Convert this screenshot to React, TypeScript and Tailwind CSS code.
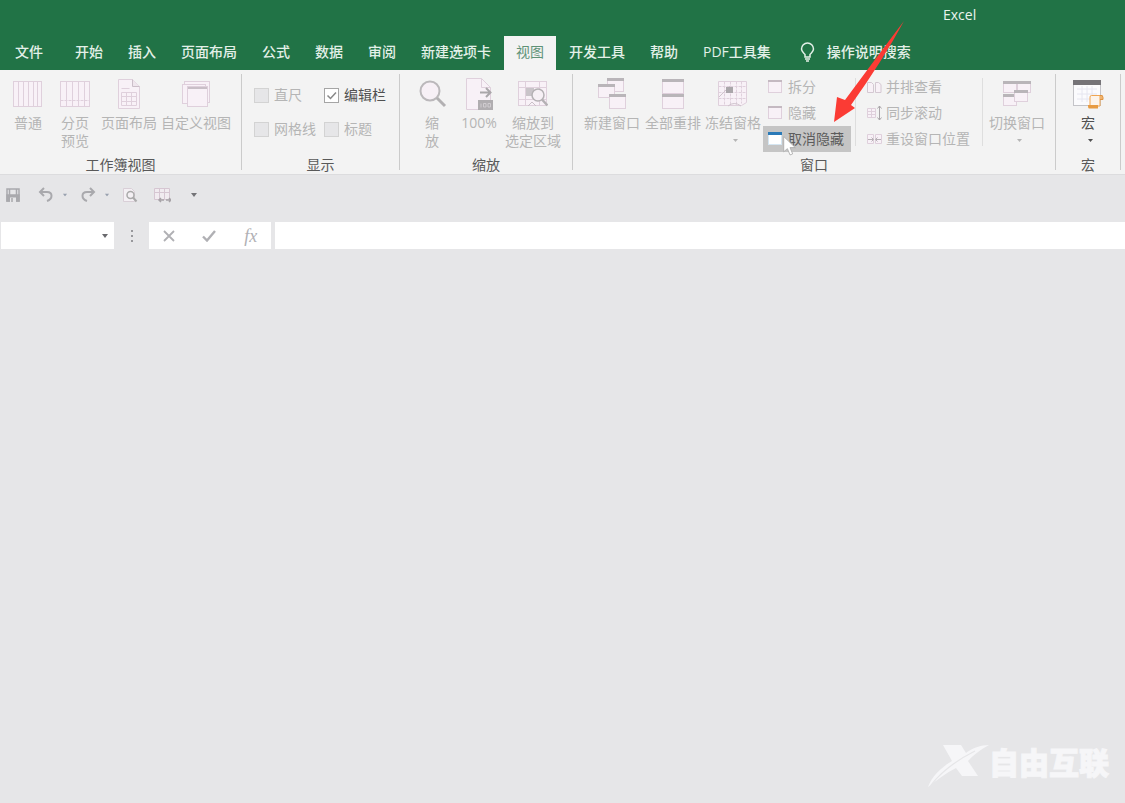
import React from 'react';

const LINE = '#dfd0dc';
const FILL = '#f8f1f7';
const BAR = '#b9b5b9';

const tabs = ['文件', '开始', '插入', '页面布局', '公式', '数据', '审阅', '新建选项卡', '视图', '开发工具', '帮助', 'PDF工具集'];

/* ---------- Icons ---------- */

const NormalViewIcon = () => (
  <svg width="30" height="28" viewBox="0 0 30 28" fill={FILL} stroke={LINE}>
    <rect x="0.5" y="1.5" width="28" height="25" />
    <path d="M5.5 1.5v25M10.5 1.5v25M15.5 1.5v25M20.5 1.5v25M24.5 1.5v25" />
  </svg>
);

const PageBreakIcon = () => (
  <svg width="30" height="28" viewBox="0 0 30 28" fill={FILL} stroke={LINE}>
    <rect x="0.5" y="1.5" width="29" height="25" />
    <path d="M6.5 1.5v25M12.5 1.5v25M18.5 1.5v25M24.5 1.5v25" />
    <path d="M0.5 20.5h29" strokeDasharray="3 1" />
  </svg>
);

const PageLayoutIcon = () => (
  <svg width="24" height="30" viewBox="0 0 24 30" fill={FILL} stroke={LINE}>
    <path d="M1.5 0.5h14l7 7v22h-21z" />
    <path d="M15.5 0.5v7h7" fill="#efe6ed" stroke="#cbbec8" />
    <path d="M4.5 9.5h8M4.5 13.5h15v13h-15zM4.5 17.5h15M4.5 22.5h15M9.5 13.5v13M14.5 13.5v13" />
  </svg>
);

const CustomViewIcon = () => (
  <svg width="28" height="28" viewBox="0 0 28 28" fill={FILL} stroke={LINE}>
    <rect x="2.5" y="1.5" width="25" height="21" />
    <rect x="0.5" y="4.5" width="23" height="19" />
    <rect x="5.5" y="6.5" width="20" height="20" />
    <path d="M6 8h19" stroke="#c9bfc7" strokeWidth="2" />
  </svg>
);

const MagnifierIcon = () => (
  <svg width="30" height="30" viewBox="0 0 30 30" fill="none">
    <circle cx="13" cy="12" r="9.5" fill="#f7f0f6" stroke="#bbb8bb" strokeWidth="2" />
    <path d="M20 19l8 8" stroke="#b2b0b2" strokeWidth="3" />
  </svg>
);

const Zoom100Icon = () => (
  <svg width="28" height="32" viewBox="0 0 28 32" fill="none">
    <path d="M1.5 0.5h15l9 9v22h-24z" fill={FILL} stroke={LINE} />
    <path d="M16.5 0.5v9h9" stroke={LINE} />
    <path d="M15 14.5h10M21 10l4.5 4.5L21 19" stroke="#aaa7aa" strokeWidth="2" />
    <rect x="13" y="22" width="15" height="10" fill="#b0adb0" />
    <path d="M16 25.5v4M18.5 25.500h2.500v3.500h-2.500zM23 25.500h2.500v3.500H23z" stroke="#d0ccd0" />
  </svg>
);

const ZoomSelectionIcon = () => (
  <svg width="30" height="28" viewBox="0 0 30 28" fill="none">
    <rect x="0.5" y="1.5" width="28" height="24" fill={FILL} stroke={LINE} />
    <path d="M0.5 7.5h28M0.5 19.5h28M7.5 1.5v24M21.5 1.5v24" stroke={LINE} />
    <path d="M8 8h8v8H8z" fill="#c9c4c9" />
    <path d="M10 26l4-4 4 4" stroke="#c9c0c7" />
    <circle cx="20" cy="15" r="6" fill="#f6f0f5" stroke="#b4b1b4" strokeWidth="1.5" />
    <path d="M24 19.5l5.5 6" stroke="#b4b1b4" strokeWidth="2.5" />
  </svg>
);

const Pane = ({ x, y, w, h }: { x: number; y: number; w: number; h: number }) => (
  <g>
    <rect x={x + 0.5} y={y + 0.5} width={w - 1} height={h - 1} fill={FILL} stroke={LINE} />
    <rect x={x} y={y} width={w} height="3" fill={BAR} />
  </g>
);

const NewWindowIcon = () => (
  <svg width="28" height="32" viewBox="0 0 28 32">
    <Pane x={9} y={0} w={17} h={14} />
    <Pane x={0} y={6} w={17} h={14} />
    <Pane x={11} y={16} w={17} h={15} />
  </svg>
);

const ArrangeIcon = () => (
  <svg width="22" height="30" viewBox="0 0 22 30">
    <Pane x={0} y={0} w={22} h={15} />
    <Pane x={0} y={15} w={22} h={15} />
  </svg>
);

const FreezeIcon = () => (
  <svg width="30" height="28" viewBox="0 0 30 28" fill="none" stroke={LINE}>
    <path d="M0.5 1.5h28v21l-5 3h-23z" fill={FILL} />
    <path d="M0.5 6.5h28M0.5 12.5h28M0.5 18.5h28M6.5 1.5v24M12.5 1.5v24M18.5 1.5v24M23.5 1.5v22" strokeDasharray="3 1" />
    <path d="M1 17L12 6" stroke="#cfc3cc" />
    <path d="M8 7h7v6H8z" fill="#aaa6aa" stroke="none" />
    <path d="M10 26q6-5 13 0" stroke="#cfc3cc" />
  </svg>
);

const SwitchIcon = () => (
  <svg width="30" height="28" viewBox="0 0 30 28">
    <Pane x={1} y={1} w={14} h={12} />
    <Pane x={15} y={1} w={14} h={12} />
    <Pane x={1} y={14} w={14} h={12} />
    <Pane x={12} y={10} w={14} h={12} />
  </svg>
);

const MacroIcon = () => (
  <svg width="32" height="30" viewBox="0 0 32 30" fill="none">
    <rect x="1.5" y="1.5" width="27" height="25" fill="#fbfbfd" stroke="#c4c4c8" />
    <path d="M5 10h20M5 15h20M5 20h20M10 7v16M15 7v16M20 7v16" stroke="#e6e6f0" />
    <rect x="1" y="1" width="28" height="5" fill="#757377" />
    <path d="M19.5 16.5h8.5v10.5h-10v-9q0-1.500 1.500-1.500z" fill="#fdf4ea" stroke="#f0a652" />
    <path d="M28 16.5q3-1 3 2v2h-3" fill="#efb36f" stroke="#df9340" />
    <path d="M16 26h10v3.500h-9q-1 0-1-3.500z" fill="#e89b41" />
  </svg>
);

const SmallPane = ({ active = false }: { active?: boolean }) => (
  <svg width="14" height="14" viewBox="0 0 14 14" className="shrink-0">
    <rect x="0.5" y="0.5" width="13" height="12" fill={active ? '#ffffff' : FILL} stroke={active ? '#d5e6f2' : LINE} />
    <rect x="0" y="0" width="14" height={active ? 3 : 2} fill={active ? '#2a7ab8' : '#c4b9c1'} />
  </svg>
);

const SideBySideIcon = () => (
  <svg width="15" height="14" viewBox="0 0 15 14" fill={FILL} stroke="#d4c8d2" className="shrink-0">
    <path d="M0.5 2.5h4l2 2v8h-6zM8.5 2.5h3l2.500 2v8H8.500z" />
  </svg>
);

const SyncIcon = () => (
  <svg width="15" height="16" viewBox="0 0 15 16" fill="none" stroke={LINE} className="shrink-0">
    <path d="M0.5 3.5h8v9h-8zM0.5 6.5h8M0.5 9.5h8M4.5 3.5v9" fill={FILL} />
    <path d="M12.5 1v14M10.5 3.5l2-2.500 2 2.500M10.500 12.500l2 2.500 2-2.500" stroke="#aaa6aa" />
  </svg>
);

const ResetIcon = () => (
  <svg width="15" height="12" viewBox="0 0 15 12" fill={FILL} stroke={LINE} className="shrink-0">
    <path d="M0.5 1.5h6v9h-6zM8.5 1.5h6v9h-6z" />
    <path d="M1 6.5h5M4.5 4.5l2 2-2 2M14 6.5H9M10.5 4.5l-2 2 2 2" fill="none" stroke="#b7b1b6" />
  </svg>
);

const Caret = ({ className = 'text-gray-400' }: { className?: string }) => (
  <svg width="6" height="4" viewBox="0 0 6 4" fill="currentColor" className={className}>
    <path d="M0 0h6L3 4z" />
  </svg>
);

/* ---------- Ribbon parts ---------- */

const BigButton = ({ icon, lines, width, caret = false, enabled = false }: {
  icon: React.ReactNode;
  lines: string[];
  width: string;
  caret?: boolean;
  enabled?: boolean;
}) => (
  <button
    disabled={!enabled}
    className={`flex flex-col items-center shrink-0 whitespace-nowrap leading-[18px] ${width} ${enabled ? 'text-[#505050]' : 'text-[#b5b5b5]'}`}
  >
    <span className="flex h-9 items-center justify-center pb-1">{icon}</span>
    {lines.map((line) => (
      <span key={line}>{line}</span>
    ))}
    {caret && (
      <span className="flex h-4 items-center pl-1">
        <svg width="5" height="3" viewBox="0 0 5 3" fill="currentColor">
          <path d="M0 0h5L2.5 3z" />
        </svg>
      </span>
    )}
  </button>
);

const Group = ({ title, children }: { title: string; children: React.ReactNode }) => (
  <>
    <section aria-label={title} className="flex shrink-0 flex-col pt-2">
      <div className="flex h-[78px]">{children}</div>
      <div className="text-center leading-[18px] text-[#595959]">{title}</div>
    </section>
    <div className="my-1 w-px shrink-0 bg-[#cbcbcb]" />
  </>
);

const Check = ({ label, checked = false }: { label: string; checked?: boolean }) => (
  <label className={`flex h-[34px] items-center gap-[5px] whitespace-nowrap ${checked ? 'text-[#505050]' : 'text-[#b5b5b5]'}`}>
    <span className="relative flex">
      <input
        type="checkbox"
        defaultChecked={checked}
        disabled={!checked}
        className="h-[15px] w-[15px] appearance-none border border-[#d3d3d3] bg-[#e6e6e8] checked:border-[#a5a5a5] checked:bg-white"
      />
      {checked && (
        <svg width="15" height="15" viewBox="0 0 15 15" fill="none" stroke="#888" strokeWidth="1.5" className="pointer-events-none absolute inset-0">
          <path d="M3.5 7.5l3 3 5.5-6" />
        </svg>
      )}
    </span>
    {label}
  </label>
);

const SmallButton = ({ icon, label, className }: { icon: React.ReactNode; label: string; className: string }) => (
  <button disabled className={`flex h-[26px] items-center whitespace-nowrap text-[#b5b5b5] ${className}`}>
    {icon}
    {label}
  </button>
);

const PointerArrow = () => (
  <svg width="72" height="104" viewBox="0 0 72 104" className="pointer-events-none absolute bottom-7 left-[70px] z-10">
    <path d="M71 1Q49 30 12 80L4 77L1 102L22 88L18 85Q50 40 71 1z" fill="#fb3b34" />
  </svg>
);

const MouseCursor = () => (
  <svg width="13" height="20" viewBox="0 0 12 19" className="pointer-events-none absolute left-5 top-2.5">
    <path d="M0.5 0.5v14.5l3.5-3 2.500 6 2.500-1-2.500-6h5z" fill="#fff" stroke="#aaa" strokeWidth="0.8" />
  </svg>
);

const Header = () => (
  <header className="bg-[#217346] text-white">
    <div className="flex h-9 items-center pl-[943px] pb-1.5 font-medium text-[#eaf4ee]">
      <h1>Excel</h1>
    </div>
    <nav className="flex h-[34px] items-stretch gap-px pl-[3px] font-medium">
      {tabs.map((tab) => (
        <button
          key={tab}
          className={`shrink-0 whitespace-nowrap px-3 pb-0.5 ${
            tab === '文件' ? 'mr-[7px]' : ''
          } ${tab === '视图' ? 'bg-[#f3f3f3] font-normal text-[#5f9277]' : 'text-[#e3f0e8]'}`}
        >
          {tab}
        </button>
      ))}
      <button className="ml-4 flex shrink-0 items-center gap-3 whitespace-nowrap pb-0.5 text-[#e3f0e8]">
        <svg width="15" height="20" viewBox="0 0 15 20" fill="none" stroke="currentColor" strokeWidth="1.5">
          <path d="M5 15v-2.500C3.500 10.500 1.500 9.500 1.500 7a6 6 0 0 1 12 0c0 2.500-2 3.500-3.500 5.500V15z" />
          <path d="M5 17h5M6 19h3" />
        </svg>
        操作说明搜索
      </button>
    </nav>
  </header>
);

const Ribbon = () => (
  <div className="flex overflow-x-clip border-b border-[#dcdcde] bg-[#f3f3f3]">
    <Group title="工作簿视图">
      <div className="flex pl-1 pr-[9px]">
        <BigButton icon={<NormalViewIcon />} lines={['普通']} width="w-12" />
        <BigButton icon={<PageBreakIcon />} lines={['分页', '预览']} width="w-[46px]" />
        <BigButton icon={<PageLayoutIcon />} lines={['页面布局']} width="w-[62px]" />
        <BigButton icon={<CustomViewIcon />} lines={['自定义视图']} width="w-[72px]" />
      </div>
    </Group>

    <Group title="显示">
      <div className="grid grid-cols-[auto_auto] content-start gap-x-2 pl-3 pr-[13px]">
        <Check label="直尺" />
        <Check label="编辑栏" checked />
        <Check label="网格线" />
        <Check label="标题" />
      </div>
    </Group>

    <Group title="缩放">
      <div className="flex px-2">
        <BigButton icon={<MagnifierIcon />} lines={['缩', '放']} width="w-12" />
        <BigButton icon={<Zoom100Icon />} lines={['100%']} width="w-[46px]" />
        <BigButton icon={<ZoomSelectionIcon />} lines={['缩放到', '选定区域']} width="w-[62px]" />
      </div>
    </Group>

    <Group title="窗口">
      <div className="flex px-2">
        <BigButton icon={<NewWindowIcon />} lines={['新建窗口']} width="w-[62px]" />
        <BigButton icon={<ArrangeIcon />} lines={['全部重排']} width="w-[60px]" />
        <BigButton icon={<FreezeIcon />} lines={['冻结窗格']} width="w-[60px]" caret />
        <div className="-mt-1 flex w-[88px] flex-col">
          <SmallButton icon={<SmallPane />} label="拆分" className="gap-1.5 px-[5px]" />
          <SmallButton icon={<SmallPane />} label="隐藏" className="gap-1.5 px-[5px]" />
          <div className="relative">
            <button className="flex h-[26px] w-full items-center gap-1.5 whitespace-nowrap bg-[#c5c5c5] px-[5px] text-[#5c5c5c]">
              <SmallPane active />
              取消隐藏
            </button>
            <MouseCursor />
            <PointerArrow />
          </div>
        </div>
        <div className="mx-1 mb-2.5 w-px bg-[#dedede]" />
        <div className="-mt-1 flex flex-col pl-1">
          <SmallButton icon={<SideBySideIcon />} label="并排查看" className="gap-1 pl-[3px]" />
          <SmallButton icon={<SyncIcon />} label="同步滚动" className="gap-1 pl-[3px]" />
          <SmallButton icon={<ResetIcon />} label="重设窗口位置" className="gap-1 pl-[3px]" />
        </div>
        <div className="mb-2.5 ml-3 mr-1 w-px bg-[#dedede]" />
        <BigButton icon={<SwitchIcon />} lines={['切换窗口']} width="w-[60px]" caret />
      </div>
    </Group>

    <Group title="宏">
      <BigButton icon={<MacroIcon />} lines={['宏']} width="w-16" caret enabled />
    </Group>
  </div>
);

const QuickAccess = () => (
  <div className="flex h-[39px] items-center pl-1.5 text-[#a9a9ad]">
    <button aria-label="保存">
      <svg width="14" height="14" viewBox="0 0 14 14" fill="none" stroke="currentColor" strokeWidth="1.5">
        <path d="M1 1h12v12H1z" />
        <path d="M1 7h12v6H1z" fill="currentColor" />
        <path d="M3.5 1v6M10.5 1v6" />
        <path d="M4 9.500h6V14H4z" fill="#e6e6e8" stroke="none" />
        <path d="M6 10v4" />
      </svg>
    </button>
    <button aria-label="撤消" className="ml-[18px]">
      <svg width="16" height="15" viewBox="0 0 16 15" fill="none" stroke="currentColor" strokeWidth="2">
        <path d="M6 1L2 5l4 4M2 5h7c6 0 6 7 0 9" />
      </svg>
    </button>
    <button aria-label="撤消选项" className="ml-2 scale-75 text-gray-400"><Caret /></button>
    <button aria-label="恢复" className="ml-3">
      <svg width="16" height="15" viewBox="0 0 16 15" fill="none" stroke="currentColor" strokeWidth="2">
        <path d="M10 1l4 4-4 4M14 5H7C1 5 1 12 7 14" />
      </svg>
    </button>
    <button aria-label="恢复选项" className="ml-2 scale-75 text-gray-400"><Caret /></button>
    <button aria-label="打印预览" className="ml-3">
      <svg width="16" height="16" viewBox="0 0 16 16" fill="none">
        <path d="M1.5 1.5h8l3 3v10h-11z" fill="#f4f0f4" stroke="#d9cfd7" />
        <circle cx="8.5" cy="8" r="3.5" stroke="#aaa" strokeWidth="1.5" />
        <path d="M11 10.5l3.5 4" stroke="#aaa" strokeWidth="2" />
      </svg>
    </button>
    <button aria-label="表格" className="ml-4">
      <svg width="17" height="16" viewBox="0 0 17 16" fill="none">
        <path d="M0.5 1.5h15v11h-15z" fill="#f1ebf0" stroke="#d6c6d2" />
        <path d="M0.5 5.5h15M5.5 1.5v11M10.5 1.5v11" stroke="#d6c6d2" />
        <path d="M6 13h4M12 13h4M7 11l-2 2 2 2M15 11l2 2-2 2" stroke="#a8a4a8" strokeWidth="1.5" />
      </svg>
    </button>
    <button aria-label="自定义快速访问工具栏" className="ml-5"><Caret className="text-[#737377]" /></button>
  </div>
);

const FormulaBar = () => (
  <div className="mt-2 flex h-[27px] pl-px text-[#b0b0b4]">
    <div className="flex w-[113px] shrink-0 items-center bg-white pr-[5px]">
      <input aria-label="名称框" className="h-full w-full min-w-0 bg-transparent px-2 outline-none" />
      <button aria-label="名称列表"><Caret className="h-1 w-2 text-[#69696d]" /></button>
    </div>
    <div className="flex w-[35px] shrink-0 flex-col items-center justify-center gap-[3px]">
      <span className="h-0.5 w-0.5 bg-[#98989c]" />
      <span className="h-0.5 w-0.5 bg-[#98989c]" />
      <span className="h-0.5 w-0.5 bg-[#98989c]" />
    </div>
    <div className="flex w-[122px] shrink-0 items-center justify-around bg-white">
      <button aria-label="取消">
        <svg width="12" height="12" viewBox="0 0 12 12" stroke="currentColor" strokeWidth="1.8">
          <path d="M1 1l10 10M11 1L1 11" />
        </svg>
      </button>
      <button aria-label="输入">
        <svg width="14" height="12" viewBox="0 0 14 12" fill="none" stroke="currentColor" strokeWidth="2.4">
          <path d="M1 6.5l4 4L13 1" />
        </svg>
      </button>
      <button aria-label="插入函数" className="font-['Liberation_Serif',serif] text-lg italic leading-5">fx</button>
    </div>
    <input aria-label="编辑栏" className="ml-1 min-w-0 flex-1 bg-white px-2 text-[#444] outline-none" />
  </div>
);

const Watermark = () => (
  <div className="flex items-center text-[#f6f6f8]">
    <svg width="62" height="44" viewBox="0 0 62 44" fill="currentColor">
      <path d="M16 1h18l5 8C45 4 54 1 62 1C53 6 46 11 41 17L51 32H35l-6-8C19 29 10 36 1 43C5 32 15 23 25 17z" />
      <path d="M4 41C15 27 28 17 48 7" fill="none" stroke="#e6e6e8" strokeWidth="1.2" />
    </svg>
    <span className="whitespace-nowrap pb-1.5 text-3xl font-black leading-10 [-webkit-text-stroke:1px_currentColor]">自由互联</span>
  </div>
);

const App = () => {
  return (
    <div className="flex min-h-screen flex-col bg-[#e6e6e8] font-['Open_Sans','Noto_Sans_CJK_SC',sans-serif] text-sm">
      <Header />
      <Ribbon />
      <QuickAccess />
      <FormulaBar />
      <main className="flex flex-1 items-end justify-end pb-3.5 pr-4">
        <Watermark />
      </main>
    </div>
  );
};

export default App;
